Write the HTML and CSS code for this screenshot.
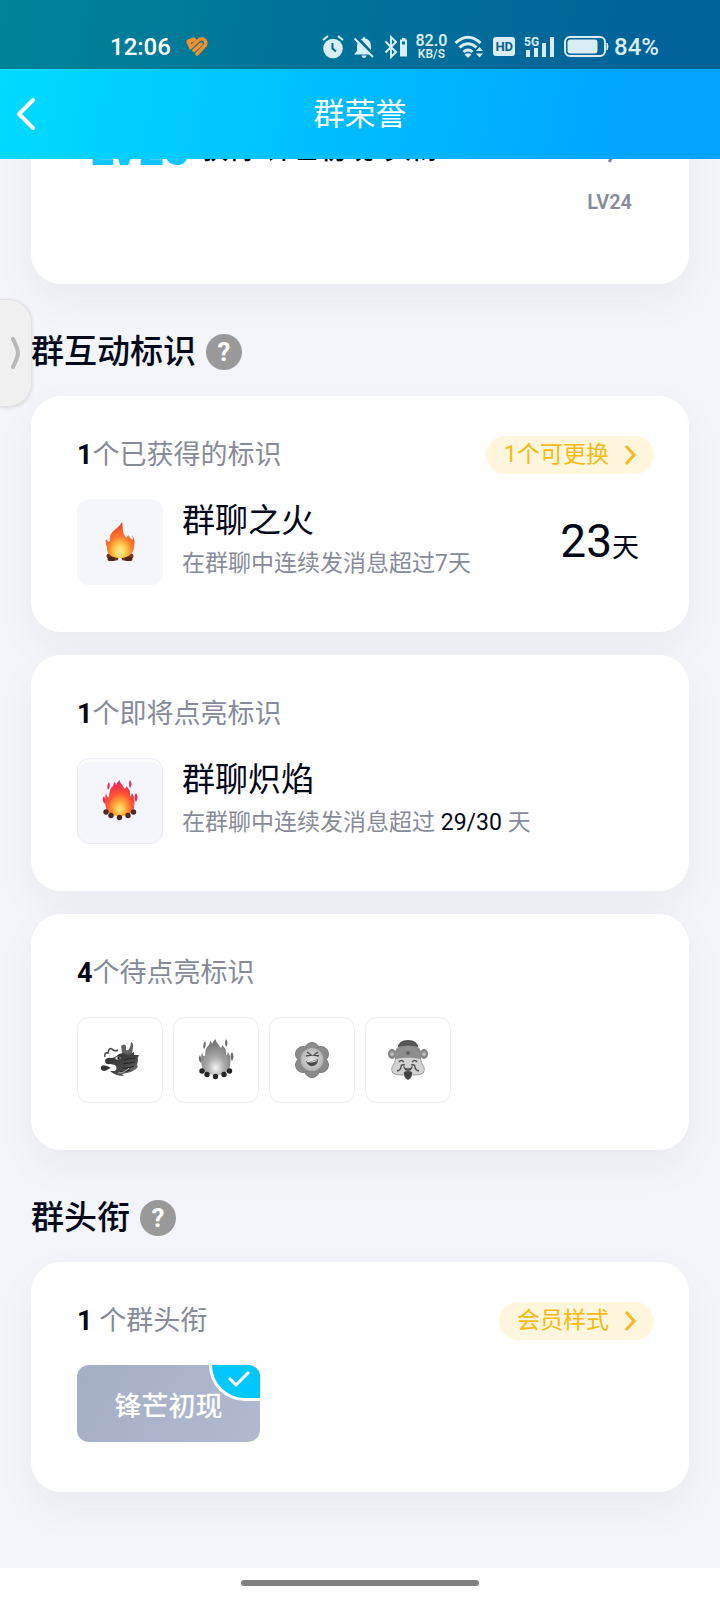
FILE: index.html
```html
<!DOCTYPE html>
<html lang="zh-CN">
<head>
<meta charset="utf-8">
<meta name="viewport" content="width=device-width, initial-scale=1">
<title>群荣誉</title>
<link rel="stylesheet" href="styles.css">
</head>
<body>
<div class="top">
  <div class="status">
    <span class="clock">12:06</span>
    <svg class="heart" width="22" height="20" viewBox="0 0 22 20" fill="none" stroke="#f78e2b" stroke-width="4" stroke-linecap="round"><path d="M2.500 4.500 8 2.500"/><path d="M2.500 5.500 4 8.500M4.500 10.500 12 3.500Q16 0 19 3.500 21 7 18 9.500L11 17" stroke-width="3.500"/><path d="M8 13.500 15 7" stroke-width="3.500"/></svg>
    <div class="icons">
      <svg width="22" height="24" viewBox="0 0 22 24"><circle cx="11" cy="13.500" r="9.800" fill="currentColor"/><path d="M1 5 6 1M21 5 16 1" stroke="currentColor" stroke-width="2"/><path d="M10.500 8v5.500l3.500 3" fill="none" stroke="#026a92" stroke-width="2"/></svg>
      <svg width="22" height="24" viewBox="0 0 22 24"><path d="M11 1.500 12.500 3.500Q18 5 18 11V16L21 19.500H1L4 16V11Q4 5 9.500 3.500ZM8.500 20.500h5Q13 23 11 23T8.500 20.500Z" fill="currentColor"/><path d="M3 2 21 21" stroke="#026c96" stroke-width="4"/><path d="M1.500 3.500 20 22" stroke="currentColor" stroke-width="2"/></svg>
      <svg width="24" height="24" viewBox="0 0 24 24"><path d="M1.500 6.500 12 17 7 22V2L12 7 1.500 17.500" fill="none" stroke="currentColor" stroke-width="2"/><path d="M16 4.500H18V3H21.500V4.500H23V21.500H16Z" fill="currentColor"/><path d="M18 6.500h3v3h-3z" fill="#026c96"/></svg>
      <span class="speed"><b>82.0</b><small>KB/S</small></span>
      <svg width="30" height="24" viewBox="0 0 30 24" fill="none" stroke="currentColor" stroke-width="3"><path d="M1.500 8Q14 -3.500 26.500 8M5.500 12.500Q14 5 22.500 12.500M9.500 17Q14 13 18.500 17"/><path d="M10.500 19.500Q14 17 17.500 19.500L14 23ZM22 16l3.500-4 3.500 4ZM22 18.500l3.500 4 3.500-4Z" fill="currentColor" stroke="none"/></svg>
      <span class="hd">HD</span>
      <svg class="signal" width="31" height="24" viewBox="0 0 31 24" fill="currentColor"><text x="0" y="11" font-size="12" font-weight="700">5G</text><path d="M2 15h4v7H2zM10 13h4v9h-4zM18 8h4v14h-4zM26 2h4v20h-4z"/></svg>
      <svg width="45" height="22" viewBox="0 0 45 22"><rect x="1" y="1" width="40" height="19" rx="5" fill="none" stroke="currentColor" stroke-width="2"/><rect x="3.500" y="3.500" width="30" height="14" rx="3" fill="currentColor"/><path d="M43 7q2 3.500 0 7z" fill="currentColor" stroke="currentColor"/></svg>
      <span class="percent">84%</span>
    </div>
  </div>
  <header class="nav">
    <button class="back" aria-label="返回"><svg width="20" height="34" viewBox="0 0 20 34"><path d="M17 3 3 17 17 31" fill="none" stroke="#fff" stroke-width="4" stroke-linecap="round" stroke-linejoin="round"/></svg></button>
    <h1>群荣誉</h1>
  </header>
</div>
<main class="page">
  <section class="card level">
    <div class="level-row"><strong>LV25</strong><span>获得“锋芒初现”头衔</span><svg class="level-arrow" width="12" height="28" viewBox="0 0 12 28"><path d="M10 12 1 26" fill="none" stroke="#878b99" stroke-width="3"/></svg></div>
    <div class="level-next">LV24</div>
  </section>

  <div class="section-title"><h2>群互动标识</h2><button class="help" aria-label="群互动标识说明">?</button></div>
  <section class="card">
    <div class="card-head"><h3><b>1</b>个已获得的标识</h3><button class="pill">1个可更换<svg width="12" height="20" viewBox="0 0 12 20"><path d="M2 1 10 10 2 19" fill="none" stroke="#ffb71b" stroke-width="3"/></svg></button></div>
    <div class="badge-row">
      <div class="tile soft">
        <svg width="30" height="40" viewBox="0 0 30 40">
          <defs><radialGradient id="fireA" cx=".5" cy=".82" r=".75"><stop offset="0" stop-color="#fff0a0"/><stop offset=".3" stop-color="#ffc747"/><stop offset=".55" stop-color="#ff7d2e"/><stop offset="1" stop-color="#f23b20"/></radialGradient></defs>
          <path d="M4 34 11 36M26 34 19 36" stroke="#74351d" stroke-width="5" stroke-linecap="round"/><path d="M4.500 37h4M21.500 37h4" stroke="#4c2418" stroke-width="4" stroke-linecap="round"/>
          <path d="M17 0C18 5 17 9 20 14Q22 17 23 13Q25 17 28 18Q28 16 27 13C31 19 29 22 29 24C29 32 23 36 15 36C6 36 1 31 2 25Q0 21 1 17Q3 21 5 19C3 9 13 8 17 0Z" fill="url(#fireA)"/>
        </svg>
      </div>
      <div class="badge-copy"><h4>群聊之火</h4><p>在群聊中连续发消息超过7天</p></div>
      <div class="days"><b>23</b>天</div>
    </div>
  </section>

  <section class="card">
    <div class="card-head"><h3><b>1</b>个即将点亮标识</h3></div>
    <div class="badge-row">
      <div class="tile soft outlined">
        <svg width="36" height="42" viewBox="0 0 36 42">
          <defs>
            <radialGradient id="fireB" cx=".5" cy=".8" r=".8"><stop offset="0" stop-color="#ffef88"/><stop offset=".25" stop-color="#ffad39"/><stop offset=".55" stop-color="#ff5133"/><stop offset="1" stop-color="#e91863"/></radialGradient>
            <g id="logs"><circle cx="4" cy="32" r="2.700"/><circle cx="9" cy="35.500" r="2.700"/><circle cx="17.500" cy="37.500" r="2.700"/><circle cx="26" cy="35.500" r="2.700"/><circle cx="31.500" cy="32" r="2.700"/></g>
            <path id="blaze" d="M18 0C17 3 21 5 22 8Q24 10 24 6Q29 10 28 16Q29 17 30 13C34 19 32 24 32 28C30 34 25 36 18 36C9 36 5 33 4 28Q2 21 4 13Q5 18 7 17Q7 9 11 6Q12 4 12 2Q14 3 14 5Q15 2 18 0Z"/>
            <path id="sparks" d="M7 2Q9 6 6 10Q4 6 7 2ZM28 0Q31 4 28 8Q26 4 28 0ZM2 16Q4 20 3 24Q-1 20 2 16ZM34 13Q37 17 34 22Q31 17 34 13Z"/>
          </defs>
          <use href="#sparks" fill="#e52b60"/><use href="#blaze" fill="url(#fireB)"/><use href="#logs" fill="#4a2823"/>
        </svg>
      </div>
      <div class="badge-copy"><h4>群聊炽焰</h4><p>在群聊中连续发消息超过 <em>29/30</em> 天</p></div>
    </div>
  </section>

  <section class="card last">
    <div class="card-head"><h3><b>4</b>个待点亮标识</h3></div>
    <div class="tiles">
      <div class="tile outlined">
        <svg width="40" height="36" viewBox="0 0 40 36">
          <defs><linearGradient id="scale" x1="0" x2="1" y1="0" y2="1"><stop stop-color="#2c2c2c"/><stop offset=".6" stop-color="#484848"/><stop offset="1" stop-color="#858585"/></linearGradient></defs>
          <path d="M22 13Q22 8 21 4Q24 1 26 4L26 8Q28 9 29 7Q31 4 31 0Q34 1 33 6L32 11L28 15Z" fill="#626262"/>
          <path d="M5 18Q7 15 12 16Q16 15 19 12Q24 10 28 13L34 10 34 13 39 13Q37 16 38 19L37 23Q39 24 36 27L31 30 22 32 24 34Q15 34 10 29L15 29Q18 26 15 23L10 22Q5 23 5 18Z" fill="url(#scale)"/>
          <path d="M7 24Q2 22 1 25Q0 29 5 29Q8 27 11 26" fill="#333"/>
          <path d="M5 15Q4 10 8 11Q9 5 12 7Q14 10 18 8" fill="none" stroke="#444" stroke-width="1.500"/>
          <path d="M15 16Q18 13 21 16L17 18Z" fill="#eee"/><circle cx="18.500" cy="16" r="1.200" fill="#111"/>
          <path d="M24 18Q30 16 35 16M23 22Q29 21 35 20M22 26Q28 27 34 24M20 29Q25 31 30 28" fill="none" stroke="#222"/><path d="M18 31Q25 31 29 26" fill="none" stroke="#aaa"/>
        </svg>
      </div>
      <div class="tile outlined">
        <svg width="36" height="42" viewBox="0 0 36 42"><defs><radialGradient id="fireGray" cx=".5" cy=".8" r=".75"><stop stop-color="#f4f4f4"/><stop offset=".4" stop-color="#aaa"/><stop offset="1" stop-color="#707070"/></radialGradient></defs><use href="#sparks" fill="#6e6e6e"/><use href="#blaze" fill="url(#fireGray)"/><use href="#logs" fill="#252525"/></svg>
      </div>
      <div class="tile outlined">
        <svg width="36" height="38" viewBox="0 0 36 38"><defs><radialGradient id="face"><stop stop-color="#e2e2e2"/><stop offset="1" stop-color="#b5b5b5"/></radialGradient></defs><g fill="#8b8b8b" stroke="#7d7d7d"><circle cx="18" cy="9" r="7.500"/><circle cx="27" cy="13" r="7.500"/><circle cx="27" cy="24" r="7.500"/><circle cx="18" cy="29" r="7.500"/><circle cx="9" cy="24" r="7.500"/><circle cx="9" cy="13" r="7.500"/></g><circle cx="18" cy="18.500" r="11.500" fill="url(#face)"/><path d="M13 11 17 14 12 15M24 11 20 14 25 15" fill="none" stroke="#4e4e4e" stroke-width="1.500"/><path d="M12 20Q18 21 24 18Q24 24 19 25T12 20Z" fill="#4a4a4a"/><path d="M13 20.500Q18 22 23 19.500" stroke="#eee" fill="none"/></svg>
      </div>
      <div class="tile outlined">
        <svg width="40" height="42" viewBox="0 0 40 42"><path d="M10 9Q10 1 20 1T30 9Z" fill="#555"/><ellipse cx="4" cy="15" rx="4" ry="5" fill="#858585"/><ellipse cx="36" cy="15" rx="4" ry="5" fill="#858585"/><circle cx="4" cy="15" r="2" fill="#bbb"/><circle cx="36" cy="15" r="2" fill="#bbb"/><path d="M8 18H32Q33 24 36 28Q38 36 28 36H12Q2 36 4 28Q7 24 8 18Z" fill="#d2d2d2" stroke="#a4a4a4"/><path d="M7 20Q5 12 10 8Q20 5 30 8Q35 12 33 20Q20 17 7 20Z" fill="#8d8d8d"/><circle cx="20" cy="14" r="2" fill="#656565"/><path d="M11 23Q13 20 16 23M24 23Q27 20 29 23M17 26Q13 25 13 28Q13 31 9 32M23 26Q27 25 27 28Q27 31 31 32" fill="none" stroke="#555" stroke-width="1.500"/><path d="M15 27Q20 30 25 27Q24 32 20 32T15 27Z" fill="#555"/><path d="M17 28Q20 30 23 28" stroke="#ddd" fill="none"/><path d="M16 33Q20 31 24 33Q25 38 20 41Q15 38 16 33Z" fill="#444"/></svg>
      </div>
    </div>
  </section>

  <div class="section-title"><h2>群头衔</h2><button class="help" aria-label="群头衔说明">?</button></div>
  <section class="card title-card">
    <div class="card-head"><h3><b>1</b> 个群头衔</h3><button class="pill">会员样式<svg width="12" height="20" viewBox="0 0 12 20"><path d="M2 1 10 10 2 19" fill="none" stroke="#ffb71b" stroke-width="3"/></svg></button></div>
    <button class="rank" aria-pressed="true">锋芒初现<span class="check"><svg width="22" height="16" viewBox="0 0 22 16"><path d="M1 7 8 14 21 1" fill="none" stroke="#fff" stroke-width="3"/></svg></span></button>
  </section>
</main>
<footer class="home"><span></span></footer>
<button class="drawer" aria-label="展开侧栏"><svg width="10" height="32" viewBox="0 0 10 32"><path d="M2 2Q7 12 7 16T2 30" fill="none" stroke="#b9b9b9" stroke-width="4" stroke-linecap="round"/></svg></button>
</body>
</html>
```
FILE: styles.css
```css
* { box-sizing: border-box; }
body {
  margin: 0;
  min-height: 100vh;
  display: flex;
  flex-direction: column;
  position: relative;
  background: #f4f5fa;
  color: #03081a;
  font-family: Roboto, "Noto Sans CJK SC", sans-serif;
}
h1, h2, h3, h4, p { margin: 0; font-weight: 400; }
button { border: 0; padding: 0; background: none; color: inherit; font: inherit; }
svg { display: block; flex: none; }
.top { position: relative; z-index: 1; background: linear-gradient(100deg, #00dcff, #00bfff 45%, #00a3ff 90%); }
.status {
  height: 69px;
  padding: 24px 61px 0 110px;
  display: flex;
  align-items: center;
  background: rgba(0, 0, 0, .4);
  color: #d9edf5;
}
.clock { color: #fff; font-size: 24px; font-weight: 500; }
.heart { margin-left: 15px; }
.icons { margin-left: auto; display: flex; align-items: center; gap: 9px; }
.speed { margin: 0 -2px; display: flex; flex-direction: column; align-items: center; }
.speed b { font-size: 16px; line-height: 14px; font-weight: 600; }
.speed small { font-size: 12px; line-height: 12px; font-weight: 600; }
.hd { padding: 0 2px; border-radius: 3px; background: #d9edf5; color: #056394; font-size: 13px; line-height: 19px; font-weight: 700; }
.percent { font-size: 24px; font-weight: 500; margin-left: -4px; }
.nav { height: 90px; display: grid; grid-template-columns: 72px 1fr 72px; align-items: center; }
.nav h1 { padding-top: 2px; color: #fff; font-size: 31px; line-height: 44px; text-align: center; }
.back { justify-self: start; padding: 8px 16px; }
.page { flex: 1; padding: 0 31px 40px; }
.card {
  margin-bottom: 23px;
  padding: 35px 35px 0 46px;
  min-height: 236px;
  border-radius: 30px;
  background: #fff;
  box-shadow: 0 16px 40px rgba(30, 35, 80, .05);
}
.card.last { margin-bottom: 0; }
.level { min-height: 0; margin-top: -60px; margin-bottom: 0; padding: 33px 57px 67px 59px; }
.level-row { display: flex; align-items: center; height: 36px; margin-bottom: 19px; line-height: 36px; font-size: 27px; font-weight: 500; }
.level-row strong { margin-right: 12px; color: #12c6fa; font-size: 44px; font-weight: 900; }
.level-arrow { margin-left: auto; margin-right: 12px; }
.level-next { color: #878b99; font-size: 20px; line-height: 30px; font-weight: 600; text-align: right; }
.section-title { height: 112px; padding-top: 24px; display: flex; align-items: center; gap: 10px; }
.section-title h2 { font-size: 33px; line-height: 44px; font-weight: 500; }
.help { width: 36px; height: 36px; border-radius: 50%; background: #999; color: #fff; font-size: 26px; line-height: 36px; font-weight: 700; }
.card-head { height: 48px; display: flex; align-items: center; justify-content: space-between; }
.card-head h3 { color: #878b99; font-size: 27px; line-height: 40px; }
.card-head b { color: #03081a; font-weight: 700; }
.pill { height: 38px; padding: 0 18px; border-radius: 19px; display: flex; align-items: center; gap: 15px; background: #fff6dd; color: #f5b90f; font-size: 23px; line-height: 38px; }
.badge-row { margin-top: 20px; display: flex; align-items: center; }
.tile { width: 86px; height: 86px; border-radius: 12px; display: grid; place-items: center; flex: none; }
.soft { background: #f4f6fb; }
.outlined { border: 1px solid #ecebf2; }
.soft.outlined { box-shadow: inset 0 3px 0 #fcfcfe; }
.badge-copy { margin-left: 19px; }
.badge-copy h4 { font-size: 33px; line-height: 44px; }
.badge-copy p { color: #878b99; font-size: 23px; line-height: 42px; }
.badge-copy em { color: #03081a; font-style: normal; }
.days { margin-left: auto; padding: 4px 15px 0 0; font-size: 27px; line-height: 56px; }
.days b { font-size: 46px; font-weight: 400; }
.tiles { margin-top: 20px; display: flex; gap: 10px; }
.title-card { min-height: 230px; margin-bottom: 0; }
.rank { position: relative; overflow: hidden; width: 183px; height: 77px; margin-top: 20px; padding-top: 2px; border-radius: 12px; background: linear-gradient(120deg, #a4aec5, #b1b9d1); color: #fff; font-size: 27px; font-weight: 500; }
.check { position: absolute; top: 0; right: 0; width: 51px; height: 36px; padding: 0 0 6px 6px; border-left: 3px solid #fff; border-bottom: 3px solid #fff; border-bottom-left-radius: 36px; background: #00c8ff; display: grid; place-items: center; }
.home { height: 32px; padding-bottom: 2px; background: #fff; display: grid; place-items: center; }
.home span { width: 33%; height: 6px; border-radius: 3px; background: #808080; }
.drawer { position: absolute; left: 0; top: 299px; width: 32px; height: 108px; border: 1px solid #e2e2e2; border-left: 0; border-radius: 0 24px 24px 0; background: #f0f0f0; box-shadow: 0 1px 4px rgba(0, 0, 0, .12); padding-left: 11px; }
```
